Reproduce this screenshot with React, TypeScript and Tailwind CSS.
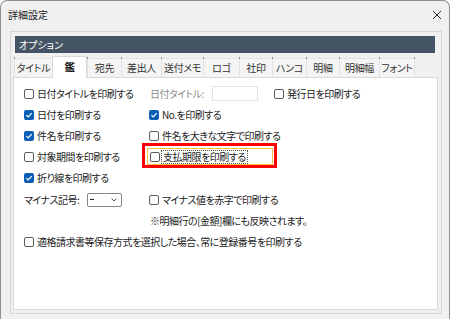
import React from "react";

function Cb({ checked }: { checked?: boolean }) {
  return checked ? (
    <span className="w-[10px] h-[10px] rounded-[2px] bg-[#0a5fb4] flex items-center justify-center shrink-0">
      <svg width="8" height="8" viewBox="0 0 8 8">
        <path d="M1.4 4.1 L3.2 5.9 L6.7 2.1" stroke="white" strokeWidth="1.2" fill="none" />
      </svg>
    </span>
  ) : (
    <span className="w-[10px] h-[10px] rounded-[2px] border border-[#5c5c5c] bg-white shrink-0" />
  );
}

function Item({ checked, label }: { checked?: boolean; label: string }) {
  return (
    <div className="flex items-center gap-[3px] whitespace-nowrap">
      <Cb checked={checked} />
      <span>{label}</span>
    </div>
  );
}

const tabs: { label: string; w: number; active?: boolean }[] = [
  { label: "タイトル", w: 38 },
  { label: "鑑", w: 35, active: true },
  { label: "宛先", w: 34 },
  { label: "差出人", w: 40 },
  { label: "送付メモ", w: 42 },
  { label: "ロゴ", w: 36 },
  { label: "社印", w: 33 },
  { label: "ハンコ", w: 34 },
  { label: "明細", w: 33 },
  { label: "明細幅", w: 40 },
  { label: "フォント", w: 36 },
];

export default function App() {
  return (
    <div className="w-[450px] h-[319px] bg-[#f0f0f0] border-x border-t border-[#8f8f8f] rounded-t-[7px] relative overflow-hidden text-[10px] leading-none text-[#1b1b1b] font-['Noto_Sans_CJK_JP',sans-serif] [font-feature-settings:'palt']">
      {/* title bar */}
      <div className="h-[27px] flex items-center justify-between pl-[7px] pr-[7px]">
        <span className="text-[10px]">詳細設定</span>
        <svg width="10" height="10" viewBox="0 0 10 10">
          <path d="M1 1 L9 9 M9 1 L1 9" stroke="#222" strokeWidth="1" fill="none" />
        </svg>
      </div>

      {/* group box */}
      <div className="mt-[3px] ml-[9px] w-[432px] h-[283px] border border-[#d6d6d6] flex flex-col">
        <div className="mt-[4px] ml-[4px] w-[420px] h-[17px] bg-[#455464] text-white flex items-center pl-[4px]">
          オプション
        </div>

        <div className="ml-[2px] w-[425px] flex flex-col">
          {/* tabs */}
          <div className="h-[24px] flex items-end pl-[1px] tracking-[-0.3px]">
            {tabs.map((t, i) =>
              t.active ? (
                <div
                  key={i}
                  style={{ width: t.w }}
                  className="relative z-10 h-[22px] -mb-px bg-white border-x border-t border-[#d9d9d9] flex items-center justify-center font-bold pb-[2px]"
                >
                  {t.label}
                </div>
              ) : (
                <div
                  key={i}
                  style={{ width: t.w }}
                  className={
                    "relative h-[19px] bg-[#f4f4f4] border-t border-l border-[#e2e2e2] flex items-center justify-center text-[#333] " +
                    (i === tabs.length - 1 ? "border-r" : "")
                  }
                >
                  <span className="absolute -left-px -top-[2px] w-px h-[2px] bg-[#8a8a8a]" />
                  {i === tabs.length - 1 && (
                    <span className="absolute -right-px -top-[2px] w-px h-[2px] bg-[#8a8a8a]" />
                  )}
                  {t.label}
                </div>
              )
            )}
          </div>

          {/* panel */}
          <div className="h-[233px] bg-white border border-[#d9d9d9] pl-[10px] pt-[5px] flex flex-col tracking-[-0.5px]">
            <div className="h-[21px] flex items-center">
              <div className="w-[125px]">
                <Item label="日付タイトルを印刷する" />
              </div>
              <div className="w-[125px] flex items-center pl-[1px]">
                <span className="w-[62px] text-[#8c8c8c] whitespace-nowrap">日付タイトル:</span>
                <span className="w-[46px] h-[15px] border border-[#e2e2e2] bg-white" />
              </div>
              <Item label="発行日を印刷する" />
            </div>

            <div className="h-[21px] flex items-center">
              <div className="w-[125px]">
                <Item checked label="日付を印刷する" />
              </div>
              <Item checked label="No.を印刷する" />
            </div>

            <div className="h-[21px] flex items-center">
              <div className="w-[125px]">
                <Item checked label="件名を印刷する" />
              </div>
              <Item label="件名を大きな文字で印刷する" />
            </div>

            <div className="h-[21px] flex items-center">
              <div className="w-[125px]">
                <Item label="対象期間を印刷する" />
              </div>
              <div className="-ml-[2px] w-[126px] h-[17px] border border-[#f2c24a] flex items-center pl-[2px] gap-[1px]">
                <Cb />
                <span className="border border-dotted border-[#555] px-[1px] py-[1px] whitespace-nowrap">支払期限を印刷する</span>
              </div>
            </div>

            <div className="h-[22px] flex items-center">
              <Item checked label="折り線を印刷する" />
            </div>

            <div className="h-[21px] flex items-center">
              <div className="w-[125px] flex items-center">
                <span className="w-[63px] whitespace-nowrap">マイナス記号:</span>
                <div className="w-[35px] h-[14px] border border-[#858585] rounded-[2px] bg-white flex items-center justify-between pl-[2px] pr-[4px]">
                  <span className="w-[4px] h-px bg-[#222] -mt-[1px]" />
                  <svg width="6" height="4" viewBox="0 0 6 4">
                    <path d="M0.5 0.5 L3 3 L5.5 0.5" stroke="#444" strokeWidth="0.9" fill="none" />
                  </svg>
                </div>
              </div>
              <Item label="マイナス値を赤字で印刷する" />
            </div>

            <div className="h-[21px] flex items-center">
              <div className="w-[126px]" />
              <span className="whitespace-nowrap">※明細行の[金額]欄にも反映されます。</span>
            </div>

            <div className="h-[21px] flex items-center">
              <Item label="適格請求書等保存方式を選択した場合、常に登録番号を印刷する" />
            </div>
          </div>
        </div>
      </div>

      {/* annotation */}
      <div className="absolute left-[141px] top-[142px] w-[135px] h-[25px] border-[3px] border-[#ff0000]" />
    </div>
  );
}
